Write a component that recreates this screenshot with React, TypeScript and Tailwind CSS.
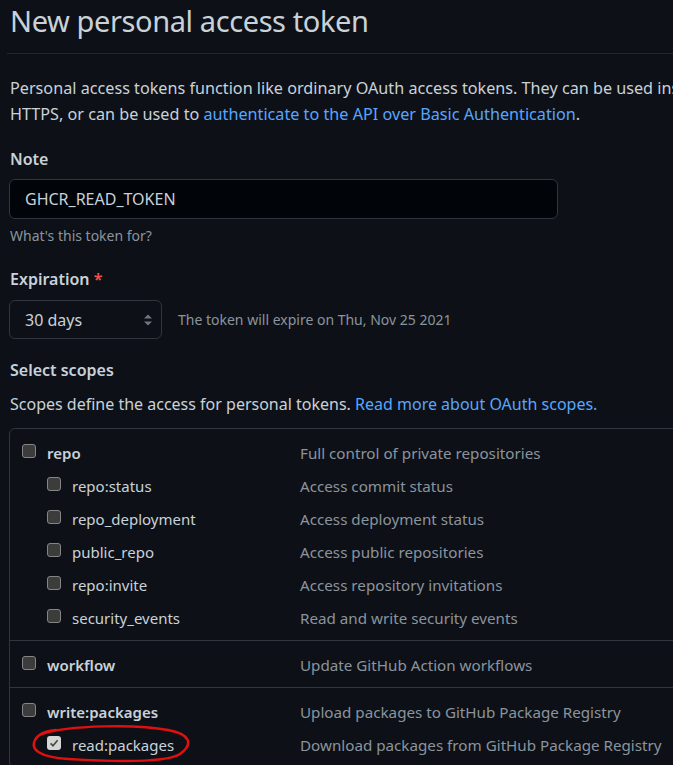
import React from "react";

const font = { fontFamily: '"Noto Sans", "Open Sans", sans-serif' };

type Scope = { name: string; desc: string; sub?: boolean; checked?: boolean };

const groups: Scope[][] = [
  [
    { name: "repo", desc: "Full control of private repositories" },
    { name: "repo:status", desc: "Access commit status", sub: true },
    { name: "repo_deployment", desc: "Access deployment status", sub: true },
    { name: "public_repo", desc: "Access public repositories", sub: true },
    { name: "repo:invite", desc: "Access repository invitations", sub: true },
    { name: "security_events", desc: "Read and write security events", sub: true },
  ],
  [{ name: "workflow", desc: "Update GitHub Action workflows" }],
  [
    { name: "write:packages", desc: "Upload packages to GitHub Package Registry" },
    { name: "read:packages", desc: "Download packages from GitHub Package Registry", sub: true, checked: true },
  ],
];

const Checkbox = ({ checked }: { checked?: boolean }) =>
  checked ? (
    <div className="w-[14px] h-[14px] rounded-[3px] bg-[#d6d6d6] flex items-center justify-center shrink-0">
      <svg width="10" height="10" viewBox="0 0 10 10">
        <path d="M1.6 5.3 L4 7.7 L8.6 2.2" fill="none" stroke="#4a4a4a" strokeWidth="1.7" />
      </svg>
    </div>
  ) : (
    <div className="w-[14px] h-[14px] rounded-[3px] bg-[#3c3c3c] border border-[#858585] shrink-0" />
  );

const ScopeRow = ({ s }: { s: Scope }) => (
  <div className="flex items-center h-[33px]">
    <div className={`flex items-center w-[290px] ${s.sub ? "pl-[37px]" : "pl-[12px]"}`}>
      <div className="-mt-[6px]">
        <Checkbox checked={s.checked} />
      </div>
      <span className={`ml-[11px] text-[15px] text-[#c9d1d9] ${s.sub ? "" : "font-semibold"}`}>{s.name}</span>
    </div>
    <span className="text-[15.2px] text-[#8b949e] whitespace-nowrap">{s.desc}</span>
  </div>
);

export default function App() {
  return (
    <div className="w-[673px] h-[765px] overflow-hidden bg-[#0d1117] relative" style={font}>
      <div className="w-[780px] pl-[9px]">
        <h1 className="text-[29px] tracking-[-0.4px] leading-[40px] text-[#c9d1d9] pt-[1px] pl-[1px]">
          New personal access token
        </h1>
        <div className="h-px bg-[#21262d] mt-[12px] -ml-[2px]" />
        <p className="mt-[21px] text-[16.2px] leading-[26px] text-[#c9d1d9] pl-[1px] whitespace-nowrap">
          Personal access tokens function like ordinary OAuth access tokens. They can be used instead of a password for Git over
          <br />
          HTTPS, or can be used to <span className="text-[#58a6ff]">authenticate to the API over Basic Authentication</span>.
        </p>

        <div className="mt-[20px] text-[16px] font-semibold text-[#c9d1d9] pl-[1px] leading-[24px]">Note</div>
        <div className="mt-[8px] w-[549px] h-[40px] rounded-[6px] border border-[#30363d] bg-[#010409] flex items-center pl-[15px] text-[16px] text-[#c9d1d9]">
          GHCR_READ_TOKEN
        </div>
        <div className="mt-[6px] text-[14px] text-[#8b949e] pl-[1px]">What's this token for?</div>

        <div className="mt-[21px] text-[16px] font-semibold text-[#c9d1d9] pl-[1px] leading-[24px]">
          Expiration <span className="text-[#f85149]">*</span>
        </div>
        <div className="mt-[9px] flex items-center">
          <div className="w-[153px] h-[39px] rounded-[6px] border border-[#30363d] bg-[#0d1117] flex items-center justify-between pl-[15px] pr-[8px] text-[16px] text-[#c9d1d9]">
            <span>30 days</span>
            <svg width="10" height="14" viewBox="0 0 10 14">
              <path d="M1 5.5 L5 1.5 L9 5.5 Z" fill="#6e7681" />
              <path d="M1 8.5 L5 12.5 L9 8.5 Z" fill="#6e7681" />
            </svg>
          </div>
          <span className="ml-[16px] text-[14px] text-[#8b949e]">The token will expire on Thu, Nov 25 2021</span>
        </div>

        <div className="mt-[19px] text-[16px] font-semibold text-[#c9d1d9] pl-[1px] leading-[24px]">Select scopes</div>
        <p className="mt-[10px] text-[16px] text-[#c9d1d9] pl-[1px] leading-[24px]">
          Scopes define the access for personal tokens. <span className="text-[#58a6ff]">Read more about OAuth scopes.</span>
        </p>

        <div className="mt-[12px] rounded-[6px] border border-[#30363d] w-[720px]">
          {groups.map((g, i) => (
            <div key={i} className={`pt-[8px] pb-[5px] ${i > 0 ? "border-t border-[#30363d]" : ""}`}>
              {g.map((s) => (
                <ScopeRow key={s.name} s={s} />
              ))}
            </div>
          ))}
        </div>
      </div>

      <svg className="absolute left-[28px] top-[722px]" width="168" height="42" viewBox="0 0 168 42">
        <path
          d="M14 12 C 40 3, 110 2, 140 8 C 162 12, 166 22, 152 32 C 138 41, 90 40, 40 37 C 12 35, 2 28, 7 18 C 10 12, 18 9, 28 8"
          fill="none"
          stroke="#e01010"
          strokeWidth="2.5"
          strokeLinecap="round"
        />
      </svg>
    </div>
  );
}
